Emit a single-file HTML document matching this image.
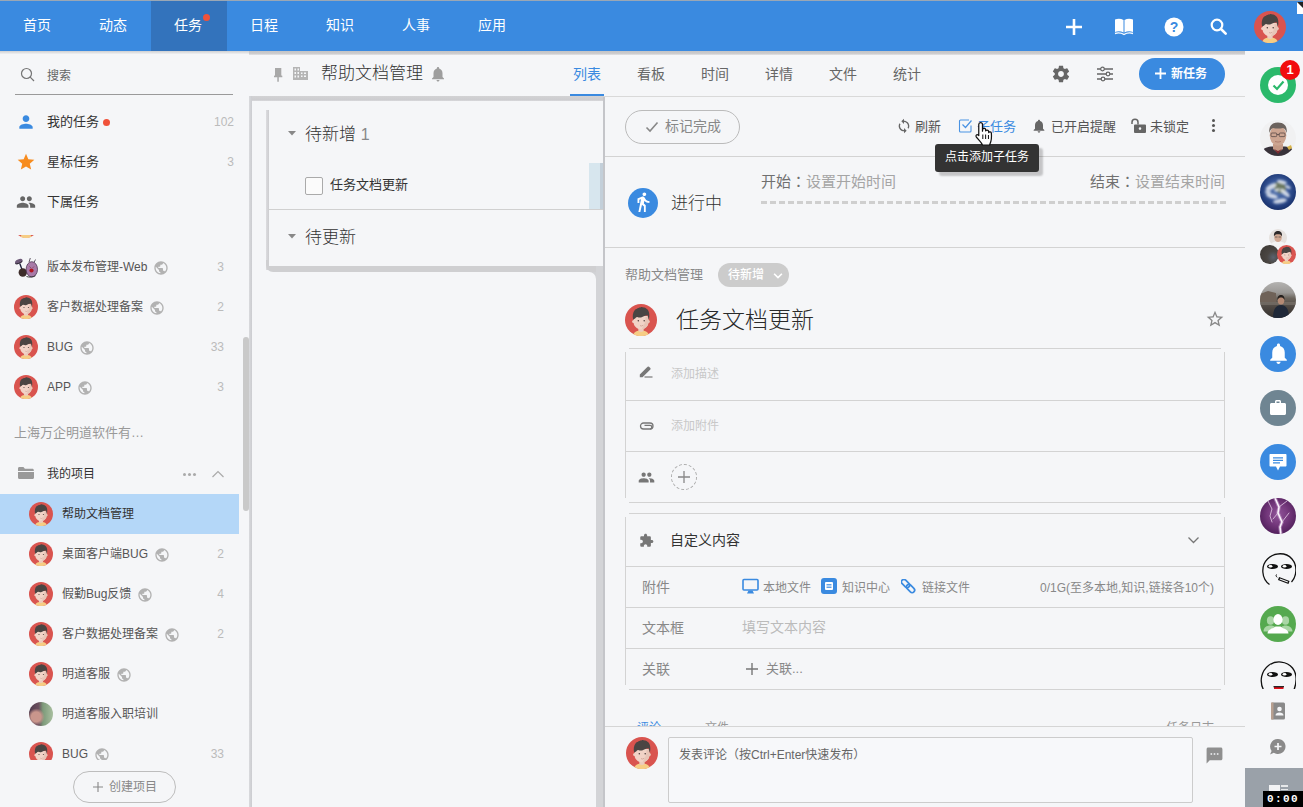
<!DOCTYPE html>
<html lang="zh-CN">
<head>
<meta charset="utf-8">
<title>任务</title>
<style>
*{box-sizing:border-box;margin:0;padding:0}
html,body{width:1303px;height:807px;overflow:hidden;background:#f5f6f8;font-family:"Liberation Sans","Noto Sans CJK SC",sans-serif;color:#333;font-size:13px}
.a{position:absolute;white-space:nowrap}
.t{position:absolute;white-space:nowrap;line-height:20px;height:20px}
#top{left:0;top:0;width:1303px;height:51px;background:#3a8ae0}
#top .n{position:absolute;top:1px;height:50px;width:76px;text-align:center;line-height:49px;color:#fff;font-size:14px;margin-left:-1px}
#top .act{margin-left:0;padding-right:2px}
#top .act{background:#3373bc}
.av{position:absolute;border-radius:50%;overflow:hidden}
.cnt{position:absolute;color:#bbb;font-size:12px;text-align:right;width:40px;line-height:20px}
.hl{position:absolute;height:1px;background:#d3d3d3}
.vl{position:absolute;width:1px;background:#d3d3d3}
</style>
</head>
<body>
<svg width="0" height="0" style="position:absolute">
<defs>
<symbol id="face" viewBox="0 0 32 32">
<circle cx="16" cy="16" r="16" fill="#d9544f"/>
<path d="M8.500 30.200c.8-2.300 3-3.200 5.200-3.500h4.600c2.200.3 4.400 1.200 5.200 3.500A16 16 0 0 1 8.500 30.200z" fill="#f6cd85"/>
<path d="M13.300 23h5.400v3.800c-1.500 1.600-3.900 1.600-5.400 0z" fill="#eccbbd"/>
<circle cx="8.600" cy="17.600" r="1.500" fill="#f0d2c6"/><circle cx="23.400" cy="17.600" r="1.500" fill="#e6c4b6"/>
<path d="M8.600 13c0-2 14.800-2 14.800 0v5.500c0 3.800-3.700 6.800-7.400 6.800s-7.400-3-7.400-6.800z" fill="#f1d3c7"/>
<path d="M16.500 25.300c3.500-.2 6.900-3.100 6.900-6.800V13h-3c.5 4-1.500 9-3.900 12.300z" fill="#e7c5b7"/>
<path d="M8.200 15.800c-.9-3.500-.6-7.500 1.800-10 1-1 1.800-.6 2.500-1.500 1-.9 2.200-.3 3.200-1.100 1.300-.7 2.300.5 3.500.3 1.500 0 2 1.200 3 1.800 2.300 2 2.600 6.500 1.700 10.300-.6-1.100-.9-2.800-1.200-4.300-2.600.2-3.900 1.100-6 2-1.500.5-3 .2-4.500-.3-1.300.2-1.800 1-2.200 1.800-.7-.1-1.200.3-1.800 1z" fill="#4a4543"/>
<circle cx="13.300" cy="16.700" r=".75" fill="#4a3a37"/><circle cx="19.200" cy="16.700" r=".75" fill="#4a3a37"/>
<path d="M15 21.600q1.700 1 3.300-.4" stroke="#c99a8c" stroke-width=".7" fill="none"/>
</symbol>
<symbol id="globe" viewBox="0 0 24 24"><path fill="#b2b2b2" d="M12 2C6.480 2 2 6.480 2 12s4.480 10 10 10 10-4.480 10-10S17.520 2 12 2zm-1 17.930c-3.950-.490-7-3.850-7-7.930 0-.620.080-1.210.210-1.790L9 15v1c0 1.100.9 2 2 2v1.930zm6.900-2.540c-.260-.810-1-1.390-1.900-1.390h-1v-3c0-.550-.450-1-1-1H8v-2h2c.550 0 1-.450 1-1V7h2c1.100 0 2-.9 2-2v-.410c2.930 1.190 5 4.060 5 7.410 0 2.080-.8 3.970-2.100 5.390z"/></symbol>
</defs>
</svg>

<!-- TOP BAR -->
<div class="a" id="top">
<div class="a" style="left:0;top:0;width:1303px;height:1px;background:#9aa7b5"></div>
<div class="n" style="left:0">首页</div>
<div class="n" style="left:76px">动态</div>
<div class="n act" style="left:151px">任务</div>
<div class="n" style="left:227px">日程</div>
<div class="n" style="left:303px">知识</div>
<div class="n" style="left:379px">人事</div>
<div class="n" style="left:455px">应用</div>
<div class="a" style="left:203px;top:14px;width:7px;height:7px;border-radius:50%;background:#f0523a"></div>
</div>


<!-- SIDEBAR -->
<div class="a" id="side" style="left:0;top:51px;width:250px;height:756px;overflow:hidden">
<svg class="a" style="left:20px;top:16px" width="16" height="16" viewBox="0 0 16 16"><circle cx="6.500" cy="6.500" r="5" fill="none" stroke="#757575" stroke-width="1.200"/><path d="M10.200 10.200L14 14" stroke="#757575" stroke-width="1.200"/></svg>
<div class="t" style="left:47px;top:15px;font-size:12px;color:#666">搜索</div>
<div class="hl" style="left:15px;top:43px;width:218px;background:#9a9a9a"></div>

<svg class="a" style="left:16px;top:61px" width="20" height="20" viewBox="0 0 24 24"><path fill="#3a8ae0" d="M12 12c2.210 0 4-1.790 4-4s-1.790-4-4-4-4 1.790-4 4 1.790 4 4 4zm0 2c-2.670 0-8 1.340-8 4v2h16v-2c0-2.660-5.330-4-8-4z"/></svg>
<div class="t" style="left:47px;top:61px">我的任务</div>
<div class="a" style="left:103px;top:68px;width:7px;height:7px;border-radius:50%;background:#f0523a"></div>
<div class="cnt" style="left:194px;top:61px">102</div>

<svg class="a" style="left:16px;top:101px" width="20" height="20" viewBox="0 0 24 24"><path fill="#f78c1f" d="M12 17.270L18.180 21l-1.640-7.030L22 9.240l-7.190-.610L12 2 9.190 8.630 2 9.240l5.460 4.730L5.820 21z"/></svg>
<div class="t" style="left:47px;top:101px">星标任务</div>
<div class="cnt" style="left:194px;top:101px">3</div>

<svg class="a" style="left:16px;top:141px" width="20" height="20" viewBox="0 0 24 24"><path fill="#666" d="M16 11c1.660 0 2.990-1.340 2.990-3S17.660 5 16 5c-1.660 0-3 1.340-3 3s1.340 3 3 3zm-8 0c1.660 0 2.990-1.340 2.990-3S9.660 5 8 5C6.340 5 5 6.340 5 8s1.340 3 3 3zm0 2c-2.330 0-7 1.170-7 3.500V19h14v-2.500c0-2.330-4.670-3.500-7-3.500zm8 0c-.290 0-.620.020-.970.050 1.160.840 1.970 1.970 1.970 3.450V19h6v-2.500c0-2.330-4.670-3.500-7-3.500z"/></svg>
<div class="t" style="left:47px;top:141px">下属任务</div>

<!-- scroll section -->
<div class="a" style="left:0;top:184px;width:240px;height:221px;overflow:hidden"><div class="a" style="left:0;top:-3px">
 <svg class="a" style="left:14px;top:-18px" width="24" height="24"><use href="#face"/></svg>
 <div class="av" style="left:14px;top:23px;width:24px;height:24px;border-radius:0;overflow:visible">
  <svg width="24" height="24" viewBox="0 0 24 24"><path d="M8 14.500L5.800 8.500" stroke="#1c1f3a" stroke-width="1.300"/><ellipse cx="4.800" cy="6.500" rx="4" ry="2.300" transform="rotate(-25 4.800 6.500)" fill="#6d5a78"/><path d="M1.300 8.600c1.500.8 4.500-.3 7-2.300" stroke="#2a2530" stroke-width="1" fill="none"/><circle cx="8.800" cy="17.500" r="4.200" fill="#3d2c2a"/><path d="M15 7.200L16.300 3M20 7.500l1.500-3" stroke="#3a3040" stroke-width=".8"/><ellipse cx="17.800" cy="14.300" rx="5.700" ry="7.600" fill="#a87aa8" stroke="#4a3350" stroke-width=".8"/><circle cx="17.500" cy="15.500" r="2.100" fill="#b01622"/><path d="M15.500 11.500l1.500 1.500M20 11.500L18.500 13" stroke="#7a3040" stroke-width=".6"/><path d="M12.500 21.500c3 1 6.500.8 9-.8" stroke="#333" stroke-width=".9" fill="none"/></svg>
 </div>
 <div class="t" style="left:47px;top:25px;font-size:12px;color:#555">版本发布管理-Web</div>
 <svg class="a" style="left:153px;top:28px" width="16" height="16"><use href="#globe"/></svg>
 <div class="cnt" style="left:184px;top:25px">3</div>

 <svg class="a" style="left:14px;top:63px" width="24" height="24"><use href="#face"/></svg>
 <div class="t" style="left:47px;top:65px;font-size:12px;color:#555">客户数据处理备案</div>
 <svg class="a" style="left:149px;top:68px" width="16" height="16"><use href="#globe"/></svg>
 <div class="cnt" style="left:184px;top:65px">2</div>

 <svg class="a" style="left:14px;top:103px" width="24" height="24"><use href="#face"/></svg>
 <div class="t" style="left:47px;top:105px;font-size:12px;color:#555">BUG</div>
 <svg class="a" style="left:79px;top:108px" width="16" height="16"><use href="#globe"/></svg>
 <div class="cnt" style="left:184px;top:105px">33</div>

 <svg class="a" style="left:14px;top:143px" width="24" height="24"><use href="#face"/></svg>
 <div class="t" style="left:47px;top:145px;font-size:12px;color:#555">APP</div>
 <svg class="a" style="left:77px;top:148px" width="16" height="16"><use href="#globe"/></svg>
 <div class="cnt" style="left:184px;top:145px">3</div>
</div>

</div><div class="t" style="left:14px;top:372px;color:#999">上海万企明道软件有…</div>

<svg class="a" style="left:17px;top:414px" width="18" height="16" viewBox="0 0 18 16"><path d="M1 3.500c0-.8.600-1.500 1.400-1.500h4l1.500 1.800h7.500c.8 0 1.400.6 1.400 1.400V6H1z" fill="#999"/><path d="M1 7h16v5.500c0 .8-.6 1.500-1.400 1.500H2.400C1.600 14 1 13.300 1 12.500z" fill="#999"/></svg>
<div class="t" style="left:47px;top:413px;font-size:12px">我的项目</div>
<div class="a" style="left:183px;top:422px;width:3px;height:3px;border-radius:50%;background:#aaa;box-shadow:5px 0 0 #aaa,10px 0 0 #aaa"></div>
<svg class="a" style="left:211px;top:418px" width="14" height="10" viewBox="0 0 14 10"><path d="M1.500 8L7 2.500 12.500 8" fill="none" stroke="#aaa" stroke-width="1.200"/></svg>

<!-- project list -->
<div class="a" style="left:0;top:443px;width:240px;height:266px;overflow:hidden"><div class="a" style="left:0;top:1px">
 <div class="a" style="left:0;top:-1px;width:239px;height:40px;background:#b4d7f8"></div>
 <svg class="a" style="left:29px;top:7px" width="24" height="24"><use href="#face"/></svg>
 <div class="t" style="left:62px;top:9px;font-size:12px">帮助文档管理</div>

 <svg class="a" style="left:29px;top:47px" width="24" height="24"><use href="#face"/></svg>
 <div class="t" style="left:62px;top:49px;font-size:12px;color:#555">桌面客户端BUG</div>
 <svg class="a" style="left:154px;top:52px" width="16" height="16"><use href="#globe"/></svg>
 <div class="cnt" style="left:184px;top:49px">2</div>

 <svg class="a" style="left:29px;top:87px" width="24" height="24"><use href="#face"/></svg>
 <div class="t" style="left:62px;top:89px;font-size:12px;color:#555">假勤Bug反馈</div>
 <svg class="a" style="left:137px;top:92px" width="16" height="16"><use href="#globe"/></svg>
 <div class="cnt" style="left:184px;top:89px">4</div>

 <svg class="a" style="left:29px;top:127px" width="24" height="24"><use href="#face"/></svg>
 <div class="t" style="left:62px;top:129px;font-size:12px;color:#555">客户数据处理备案</div>
 <svg class="a" style="left:164px;top:132px" width="16" height="16"><use href="#globe"/></svg>
 <div class="cnt" style="left:184px;top:129px">2</div>

 <svg class="a" style="left:29px;top:167px" width="24" height="24"><use href="#face"/></svg>
 <div class="t" style="left:62px;top:169px;font-size:12px;color:#555">明道客服</div>
 <svg class="a" style="left:116px;top:172px" width="16" height="16"><use href="#globe"/></svg>

 <div class="av" style="left:29px;top:207px;width:24px;height:24px;background:radial-gradient(circle at 30% 62%,#c9968c 0,#c9968c 22%,rgba(201,150,140,0) 38%),linear-gradient(90deg,#4f3a4c 0,#6a4f5e 40%,#7d9a7a 58%,#a9bfa0 100%)"></div>
 <div class="t" style="left:62px;top:209px;font-size:12px;color:#555">明道客服入职培训</div>

 <svg class="a" style="left:29px;top:247px" width="24" height="24"><use href="#face"/></svg>
 <div class="t" style="left:62px;top:249px;font-size:12px;color:#555">BUG</div>
 <svg class="a" style="left:94px;top:252px" width="16" height="16"><use href="#globe"/></svg>
 <div class="cnt" style="left:184px;top:249px">33</div>
</div>

</div><div class="a" style="left:73px;top:720px;width:103px;height:32px;border:1px solid #bdbdbd;border-radius:16px;line-height:30px;color:#888;font-size:12px;padding-left:35px">创建项目</div><svg class="a" style="left:93px;top:731px" width="10" height="10" viewBox="0 0 10 10"><path d="M5 0v10M0 5h10" stroke="#888" stroke-width="1.100"/></svg>

<!-- scrollbar -->
<div class="a" style="left:243px;top:286px;width:6px;height:174px;background:#c9c9c9;border-radius:3px"></div>

</div>


<div class="a" style="left:0;top:51px;width:249px;height:3px;background:linear-gradient(#cfd0d2,#e2e3e5 60%,#f0f1f3)"></div>
<div class="a" style="left:249px;top:51px;width:996px;height:4px;background:linear-gradient(#c4c4c6 0,#cbcbcd 60%,#e4e4e6 100%)"></div>
<!-- HEADER ROW -->
<div class="a" id="hdr" style="left:250px;top:51px;width:995px;height:46px">
<svg class="a" style="left:21px;top:16px" width="14" height="16" viewBox="0 0 14 16"><path d="M4 1h6.300v7.500l1 .3v1.500H7.800v4.500H6.300v-4.500H3V8.800l1-.3z" fill="#a8a8a8"/></svg>
<svg class="a" style="left:42px;top:15px" width="17" height="15" viewBox="0 0 17 15"><path d="M1 1h7v4h8v9H1zM2.500 2.500v2h1.500v-2zm3 0v2H7v-2zm-3 3.500v2h1.500V6zm3 0v2H7V6zm-3 3.500v2h1.500v-2zm3 0v2H7v-2zm3.500-3v1.500h1.500V6.500zm3 0v1.500H14V6.500zm-3 3v1.500h1.500V9.500zm3 0v1.500H14V9.500z" fill="#b5b5b5" fill-rule="evenodd"/></svg>
<div class="t" style="left:71px;top:13px;font-size:17px;color:#333;font-weight:300">帮助文档管理</div>
<svg class="a" style="left:179px;top:14px" width="18" height="18" viewBox="0 0 24 24"><path fill="#9e9e9e" d="M12 22c1.100 0 2-.9 2-2h-4c0 1.100.89 2 2 2zm6-6v-5c0-3.070-1.640-5.640-4.500-6.320V4c0-.830-.670-1.500-1.500-1.500s-1.500.670-1.500 1.500v.680C7.630 5.360 6 7.920 6 11v5l-2 2v1h16v-1l-2-2z"/></svg>
<div class="t" style="left:323px;top:13px;font-size:14px;color:#3a8ae0">列表</div>
<div class="t" style="left:387px;top:13px;font-size:14px;color:#666">看板</div>
<div class="t" style="left:451px;top:13px;font-size:14px;color:#666">时间</div>
<div class="t" style="left:515px;top:13px;font-size:14px;color:#666">详情</div>
<div class="t" style="left:579px;top:13px;font-size:14px;color:#666">文件</div>
<div class="t" style="left:643px;top:13px;font-size:14px;color:#666">统计</div>
<div class="a" style="left:320px;top:43px;width:34px;height:3px;background:#3a8ae0"></div>
<svg class="a" style="left:801px;top:13px" width="20" height="20" viewBox="0 0 24 24"><path fill="#666" d="M19.430 12.980c.040-.320.070-.640.070-.980s-.030-.660-.070-.980l2.110-1.650c.190-.150.240-.420.120-.640l-2-3.460c-.120-.220-.390-.3-.610-.220l-2.490 1c-.520-.4-1.080-.730-1.690-.980l-.380-2.650C14.460 2.180 14.250 2 14 2h-4c-.250 0-.460.180-.490.420l-.380 2.650c-.610.250-1.170.590-1.690.980l-2.490-1c-.230-.090-.490 0-.610.220l-2 3.460c-.130.220-.070.490.120.640l2.110 1.650c-.040.320-.070.650-.070.980s.030.660.070.980l-2.110 1.650c-.190.150-.240.420-.120.640l2 3.460c.120.220.390.3.610.220l2.490-1c.520.400 1.080.730 1.690.980l.380 2.650c.030.240.240.420.490.420h4c.250 0 .460-.180.490-.420l.380-2.650c.610-.250 1.170-.590 1.690-.980l2.490 1c.230.090.490 0 .610-.220l2-3.460c.120-.220.070-.490-.120-.640l-2.110-1.650zM12 15.500c-1.930 0-3.500-1.570-3.500-3.500s1.570-3.500 3.500-3.500 3.500 1.570 3.500 3.500-1.570 3.500-3.500 3.500z"/></svg>
<svg class="a" style="left:846px;top:14px" width="18" height="18" viewBox="0 0 18 18"><g stroke="#666" stroke-width="1.300" fill="none"><path d="M1 4h16M1 9h16M1 14h16"/></g><circle cx="6.500" cy="4" r="1.800" fill="#f5f6f8" stroke="#666" stroke-width="1.200"/><circle cx="12" cy="9" r="1.800" fill="#f5f6f8" stroke="#666" stroke-width="1.200"/><circle cx="7" cy="14" r="1.800" fill="#f5f6f8" stroke="#666" stroke-width="1.200"/></svg>
<div class="a" style="left:889px;top:7px;width:86px;height:32px;border-radius:16px;background:#3a8ae0;color:#fff;font-size:12px;line-height:33px;font-weight:bold;padding-left:32px">新任务</div><svg class="a" style="left:905px;top:17px" width="11" height="11" viewBox="0 0 11 11"><path d="M5.500 0v11M0 5.500h11" stroke="#fff" stroke-width="1.800"/></svg>
<div class="hl" style="left:354px;top:45px;width:641px;background:#d9d9d9"></div>
</div>

<!-- LIST AREA -->
<div class="a" style="left:249px;top:96px;width:355px;height:5px;background:linear-gradient(#d2d2d4,#cdcdd0 70%,#d8d8db);z-index:1"></div>
<div class="a" style="left:249px;top:96px;width:3px;height:711px;background:linear-gradient(90deg,#d9dadd,#cbccd0);z-index:1"></div>
<div class="a" id="list" style="left:250px;top:97px;width:354px;height:710px;overflow:hidden">
 <div class="a" style="left:16px;top:13px;width:3px;height:160px;background:linear-gradient(90deg,#dcdcdf,#cdcdd0)"></div>
 <div class="a" style="left:16px;top:163px;width:340px;height:12px;background:#cfcfd1;border-radius:0 0 0 7px"></div>
 <div class="a" style="left:19px;top:163px;width:337px;height:6px;background:#f5f6f8"></div>
 <div class="a" style="left:346px;top:169px;width:7px;height:545px;background:#d3d4d7"></div>
 <div class="a" style="left:338px;top:175px;width:8px;height:8px;background:#d1d2d5"></div>
 <div class="a" style="left:19px;top:175px;width:327px;height:545px;background:#f5f6f8;border-radius:0 7px 0 0"></div>
 <svg class="a" style="left:37.500px;top:34px" width="8" height="4.500" viewBox="0 0 9 5"><path d="M0 0h9L4.500 5z" fill="#888"/></svg>
 <div class="t" style="left:55px;top:28px;font-size:17px;color:#333;font-weight:300">待新增 <span style="color:#888;font-size:16px">1</span></div>
 <div class="a" style="left:339px;top:66px;width:15px;height:46px;background:linear-gradient(90deg,#d7e6ee 0,#d7e6ee 11px,#c3cfd9 11px)"></div>
 <div class="a" style="left:55px;top:80px;width:18px;height:18px;border:1px solid #aaa;border-radius:2px;background:#fbfbfb"></div>
 <div class="t" style="left:80px;top:78px;font-size:13px;color:#333">任务文档更新</div>
 <div class="hl" style="left:18px;top:112px;width:336px;background:#d0d0d0"></div>
 <svg class="a" style="left:37.500px;top:137px" width="8" height="4.500" viewBox="0 0 9 5"><path d="M0 0h9L4.500 5z" fill="#888"/></svg>
 <div class="t" style="left:55px;top:131px;font-size:17px;color:#333;font-weight:300">待更新</div>
</div>

<div class="a" style="left:603px;top:97px;width:2px;height:710px;background:#c4c5c9;z-index:2"></div>
<!-- DETAIL PANEL -->
<div class="a" id="det" style="left:604px;top:97px;width:641px;height:710px;background:#f5f6f8;overflow:hidden">
 <div class="a" style="left:21px;top:13px;width:115px;height:34px;border:1px solid #bbb;border-radius:17px;color:#888;font-size:14px;line-height:31px;padding-left:39px">标记完成</div>
 <svg class="a" style="left:41px;top:24px" width="14" height="12" viewBox="0 0 14 12"><path d="M1.500 6.500L5 10 12.500 1.500" fill="none" stroke="#888" stroke-width="1.600"/></svg>

 <svg class="a" style="left:292px;top:21px" width="16" height="16" viewBox="0 0 24 24"><path fill="#666" d="M12 4V1L8 5l4 4V6c3.310 0 6 2.690 6 6 0 1.010-.250 1.970-.7 2.800l1.460 1.460C19.540 15.030 20 13.570 20 12c0-4.420-3.580-8-8-8zm0 14c-3.310 0-6-2.690-6-6 0-1.010.250-1.970.7-2.800L5.240 7.740C4.460 8.970 4 10.430 4 12c0 4.420 3.580 8 8 8v3l4-4-4-4v3z"/></svg>
 <div class="t" style="left:311px;top:20px;color:#555">刷新</div>
 <svg class="a" style="left:354px;top:21px" width="15" height="15" viewBox="0 0 15 15"><path d="M13 7.500V13a1 1 0 0 1-1 1H2.500a1 1 0 0 1-1-1V3a1 1 0 0 1 1-1H11" fill="none" stroke="#4a93e3" stroke-width="1.100"/><path d="M4.500 6.500L7.500 9.500 13.500 2.500" fill="none" stroke="#4a93e3" stroke-width="1.200"/></svg>
 <div class="t" style="left:373px;top:20px;color:#3a8ae0">子任务</div>
 <svg class="a" style="left:427px;top:21px" width="16" height="16" viewBox="0 0 24 24"><path fill="#666" d="M12 22c1.100 0 2-.9 2-2h-4c0 1.100.89 2 2 2zm6-6v-5c0-3.070-1.640-5.640-4.500-6.320V4c0-.830-.670-1.500-1.500-1.500s-1.500.670-1.500 1.500v.680C7.630 5.360 6 7.920 6 11v5l-2 2v1h16v-1l-2-2z"/></svg>
 <div class="t" style="left:447px;top:20px;color:#555">已开启提醒</div>
 <svg class="a" style="left:526px;top:20px" width="17" height="17" viewBox="0 0 17 17"><path d="M2 7V5.200a3 3 0 0 1 6 0V7.500" fill="none" stroke="#666" stroke-width="1.500"/><path d="M5 7.500h10a1 1 0 0 1 1 1V15a1 1 0 0 1-1 1H5a1 1 0 0 1-1-1V8.500a1 1 0 0 1 1-1zM10 10.300a1.300 1.300 0 1 0 0 2.600 1.300 1.300 0 0 0 0-2.600z" fill="#666" fill-rule="evenodd"/></svg>
 <div class="t" style="left:546px;top:20px;color:#555">未锁定</div>
 <div class="a" style="left:607px;top:22px;width:3px;height:3px;border-radius:50%;background:#555;box-shadow:0 5px 0 #555,0 10px 0 #555;margin-left:.5px"></div>

 <div class="hl" style="left:0;top:59px;width:641px"></div>
 <div class="a" style="left:24px;top:91px;width:30px;height:30px;border-radius:50%;background:#3a8ae0"></div>
 <svg class="a" style="left:28px;top:94px" width="22" height="22" viewBox="0 0 24 24"><path fill="#fff" d="M13.500 5.500c1.100 0 2-.9 2-2s-.9-2-2-2-2 .9-2 2 .9 2 2 2zM9.800 8.900L7 23h2.100l1.800-8 2.100 2v6h2v-7.500l-2.100-2 .6-3C14.800 12 16.800 13 19 13v-2c-1.900 0-3.500-1-4.300-2.400l-1-1.600c-.4-.6-1-1-1.700-1-.3 0-.5.100-.8.100L6 8.300V13h2V9.600l1.800-.7"/></svg>
 <div class="t" style="left:67px;top:96px;font-size:17px;line-height:21px;color:#333;font-weight:300">进行中</div>
 <div class="t" style="left:157px;top:74px;font-size:15px;color:#a5a5a5"><span style="color:#707070">开始<span lang="zh-TW" style="font-family:'Noto Sans CJK TC',sans-serif">：</span></span>设置开始时间</div>
 <div class="t" style="right:20px;top:74px;font-size:15px;color:#a5a5a5"><span style="color:#707070">结束<span lang="zh-TW" style="font-family:'Noto Sans CJK TC',sans-serif">：</span></span>设置结束时间</div>
 <div class="a" style="left:157px;top:104px;width:465px;height:3px;background:repeating-linear-gradient(90deg,#cfcfcf 0,#cfcfcf 6px,transparent 6px,transparent 9px)"></div>
 <div class="hl" style="left:0;top:150px;width:641px"></div>

 <div class="t" style="left:21px;top:168px;color:#888">帮助文档管理</div>
 <div class="a" style="left:114px;top:166px;width:71px;height:24px;border-radius:12px;background:#ccc;color:#fff;font-size:12px;line-height:25px;padding-left:10px;font-weight:500">待新增</div>
 <svg class="a" style="left:169px;top:175px" width="10" height="8" viewBox="0 0 9 7"><path d="M1 1.500L4.500 5 8 1.500" fill="none" stroke="#fff" stroke-width="1.500"/></svg>

 <svg class="a" style="left:21px;top:207px" width="32" height="32"><use href="#face"/></svg>
 <div class="t" style="left:72px;top:209px;font-size:23px;line-height:28px;height:28px;color:#2a2a2a;font-weight:300">任务文档更新</div>
 <svg class="a" style="left:601px;top:212px" width="20" height="20" viewBox="0 0 24 24"><path fill="#888" d="M22 9.240l-7.190-.620L12 2 9.190 8.630 2 9.240l5.460 4.730L5.820 21 12 17.270 18.180 21l-1.630-7.030L22 9.240zM12 15.400l-3.760 2.270 1-4.280-3.320-2.880 4.380-.380L12 6.100l1.710 4.040 4.380.380-3.320 2.880 1 4.280L12 15.400z"/></svg>

 <!-- box 1 -->
 <div class="hl" style="left:25px;top:251px;width:592px"></div>
 <div class="vl" style="left:21px;top:255px;height:146px"></div>
 <div class="vl" style="left:620px;top:255px;height:146px"></div>
 <div class="hl" style="left:21px;top:303px;width:600px"></div>
 <div class="hl" style="left:21px;top:354px;width:600px"></div>
 <div class="hl" style="left:25px;top:405px;width:592px"></div>
 <svg class="a" style="left:35px;top:268px" width="15" height="14" viewBox="0 0 15 14"><path d="M.8 12.200V9.600L8.600 1.800a1 1 0 0 1 1.400 0l1.300 1.300a1 1 0 0 1 0 1.400L3.500 12.200z" fill="#777"/><path d="M5.500 12h8" stroke="#777" stroke-width="1.200"/></svg>
 <div class="t" style="left:67px;top:267px;font-size:12px;color:#c8c8c8">添加描述</div>
 <svg class="a" style="left:34px;top:323px" width="16" height="12" viewBox="0 0 16 12"><path d="M12 3H5.500a3 3 0 0 0 0 6H12a1.800 1.800 0 0 0 0-3.600H6.500" fill="none" stroke="#777" stroke-width="1.300"/><path d="M12 3a3 3 0 0 1 0 6" fill="none" stroke="#777" stroke-width="1.300"/></svg>
 <div class="t" style="left:67px;top:319px;font-size:12px;color:#c8c8c8">添加附件</div>
 <svg class="a" style="left:34px;top:372px" width="17" height="17" viewBox="0 0 24 24"><path fill="#777" d="M16 11c1.660 0 2.990-1.340 2.990-3S17.660 5 16 5c-1.660 0-3 1.340-3 3s1.340 3 3 3zm-8 0c1.660 0 2.990-1.340 2.990-3S9.660 5 8 5C6.340 5 5 6.340 5 8s1.340 3 3 3zm0 2c-2.330 0-7 1.170-7 3.500V19h14v-2.500c0-2.330-4.670-3.500-7-3.500zm8 0c-.290 0-.620.020-.970.050 1.160.840 1.970 1.970 1.970 3.450V19h6v-2.500c0-2.330-4.670-3.500-7-3.500z"/></svg>
 <div class="a" style="left:67px;top:367px;width:26px;height:26px;border:1px dashed #aaa;border-radius:50%"></div>
 <svg class="a" style="left:74px;top:374px" width="12" height="12" viewBox="0 0 12 12"><path d="M6 0v12M0 6h12" stroke="#888" stroke-width="1.300"/></svg>

 <!-- box 2 -->
 <div class="hl" style="left:25px;top:416px;width:592px"></div>
 <div class="vl" style="left:21px;top:420px;height:168px"></div>
 <div class="vl" style="left:620px;top:420px;height:168px"></div>
 <div class="hl" style="left:21px;top:469px;width:600px"></div>
 <div class="hl" style="left:21px;top:510px;width:600px"></div>
 <div class="hl" style="left:21px;top:551px;width:600px"></div>
 <div class="hl" style="left:25px;top:592px;width:592px"></div>
 <svg class="a" style="left:35px;top:436px" width="15" height="15" viewBox="0 0 24 24"><path fill="#777" d="M20.500 11H19V7c0-1.100-.9-2-2-2h-4V3.500C13 2.120 11.880 1 10.500 1S8 2.120 8 3.500V5H4c-1.100 0-1.990.9-1.990 2v3.800H3.500c1.490 0 2.700 1.210 2.700 2.700s-1.210 2.700-2.700 2.700H2V20c0 1.100.9 2 2 2h3.800v-1.500c0-1.490 1.210-2.700 2.700-2.700 1.490 0 2.700 1.210 2.700 2.700V22H17c1.100 0 2-.9 2-2v-4h1.500c1.380 0 2.500-1.120 2.500-2.500S21.880 11 20.500 11z"/></svg>
 <div class="t" style="left:66px;top:433px;font-size:14px;color:#333">自定义内容</div>
 <svg class="a" style="left:583px;top:439px" width="13" height="9" viewBox="0 0 13 9"><path d="M1.500 1.500l5 5 5-5" fill="none" stroke="#777" stroke-width="1.300"/></svg>

 <div class="t" style="left:38px;top:480px;font-size:14px;color:#888">附件</div>
 <svg class="a" style="left:138px;top:481px" width="17" height="17" viewBox="0 0 17 17"><rect x="1" y="1.500" width="15" height="10.500" rx="1" fill="none" stroke="#3a8ae0" stroke-width="1.600"/><path d="M5 15.500h7l-1.500-3h-4z" fill="#3a8ae0"/></svg>
 <div class="t" style="left:159px;top:481px;font-size:12px;color:#888">本地文件</div>
 <div class="a" style="left:217px;top:481px;width:16px;height:16px;border-radius:3px;background:#3a8ae0"></div>
 <svg class="a" style="left:221px;top:485px" width="8" height="8" viewBox="0 0 8 8"><rect x="0" y="0" width="8" height="8" rx="1" fill="#fff"/><path d="M1.500 2.500h5M1.500 4h5M1.500 5.500h5" stroke="#3a8ae0" stroke-width=".8"/></svg>
 <div class="t" style="left:238px;top:481px;font-size:12px;color:#888">知识中心</div>
 <svg class="a" style="left:297px;top:482px" width="17" height="17" viewBox="0 0 17 17"><g fill="none" stroke="#3a8ae0" stroke-width="1.700"><rect x="-2" y="-2" width="9.500" height="5" rx="2.500" transform="translate(4.500 4.500) rotate(45) translate(-2.700 -.5)"/><rect x="-2" y="-2" width="9.500" height="5" rx="2.500" transform="translate(9.500 9.500) rotate(45) translate(-2.700 -.5)"/></g></svg>
 <div class="t" style="left:318px;top:481px;font-size:12px;color:#888">链接文件</div>
 <div class="t" style="right:31px;top:481px;font-size:12px;color:#888">0/1G(至多本地,知识,链接各10个)</div>

 <div class="t" style="left:38px;top:521px;font-size:14px;color:#888">文本框</div>
 <div class="t" style="left:138px;top:520px;font-size:14px;color:#bbb">填写文本内容</div>

 <div class="t" style="left:38px;top:562px;font-size:14px;color:#888">关联</div>
 <svg class="a" style="left:142px;top:566px" width="12" height="12" viewBox="0 0 12 12"><path d="M6 0v12M0 6h12" stroke="#777" stroke-width="1.400"/></svg>
 <div class="t" style="left:162px;top:562px;font-size:13px;color:#888">关联...</div>

 <!-- clipped tabs -->
 <div class="a" style="left:0;top:615px;width:641px;height:14px;overflow:hidden">
  <div class="t" style="left:33px;top:6px;font-size:12px;color:#3a8ae0">评论</div>
  <div class="t" style="left:101px;top:6px;font-size:12px;color:#999">文件</div>
  <div class="t" style="right:31px;top:6px;font-size:12px;color:#999">任务日志</div>
 </div>

 <!-- comment -->
 <div class="a" style="left:0;top:629px;width:641px;height:81px;background:#f5f6f8;border-top:1px solid #d5d5d5"></div>
 <svg class="a" style="left:22px;top:640px" width="32" height="32"><use href="#face"/></svg>
 <div class="a" style="left:64px;top:640px;width:525px;height:66px;border:1px solid #ccc;border-radius:2px;background:#f7f8fa"></div>
 <div class="t" style="left:75px;top:648px;font-size:12px;color:#666">发表评论（按Ctrl+Enter快速发布）</div>
 <svg class="a" style="left:601px;top:649px" width="19" height="19" viewBox="0 0 24 24"><path fill="#8f8f8f" d="M20 2H4c-1.100 0-1.990.9-1.990 2L2 22l4-4h14c1.100 0 2-.9 2-2V4c0-1.100-.9-2-2-2zM9 11H7V9h2v2zm4 0h-2V9h2v2zm4 0h-2V9h2v2z"/></svg>
</div>


<!-- TOP RIGHT ICONS --><div class="a" style="left:0;top:0;z-index:6">
<svg class="a" style="left:1065px;top:18px" width="18" height="18" viewBox="0 0 18 18"><path d="M9 1v16M1 9h16" stroke="#fff" stroke-width="2.600"/></svg>
<svg class="a" style="left:1114px;top:17px" width="20" height="19" viewBox="0 0 20 19"><path d="M1 2.500C4 1.200 7 1.500 9.500 3v12.500C7 14 4 13.800 1 15zM19 2.500C16 1.200 13 1.500 10.500 3v12.500C13 14 16 13.800 19 15z" fill="#fff"/><path d="M1 16.500c3-1 6-.8 9 1 3-1.800 6-2 9-1" stroke="#fff" stroke-width="1.400" fill="none"/></svg>
<svg class="a" style="left:1164px;top:17px" width="20" height="20" viewBox="0 0 20 20"><circle cx="10" cy="10" r="9.500" fill="#fff"/><text x="10" y="15" text-anchor="middle" font-family="Liberation Sans,sans-serif" font-weight="bold" font-size="14" fill="#3a8ae0">?</text></svg>
<svg class="a" style="left:1210px;top:18px" width="18" height="18" viewBox="0 0 18 18"><circle cx="7" cy="7" r="5.300" fill="none" stroke="#fff" stroke-width="2.200"/><path d="M11 11L15.700 15.700" stroke="#fff" stroke-width="2.600" stroke-linecap="round"/></svg>
<svg class="a" style="left:1254px;top:11px" width="32" height="32"><use href="#face"/></svg>
<div class="a" style="left:1297px;top:2px;width:6px;height:12px;background:#fff"></div>
<div class="a" style="left:1297px;top:2px;width:0;height:0;border-left:6px solid transparent;border-top:6px solid #222"></div>

</div>
<!-- RIGHT RAIL -->
<div class="a" id="rail" style="left:1245px;top:54px;width:58px;height:753px;background:#f5f6f8;overflow:hidden">
 <div class="a" style="left:15px;top:13px;width:36px;height:36px;border-radius:50%;background:#2bb96b"></div>
 <div class="a" style="left:23px;top:21px;width:20px;height:20px;border-radius:50%;background:#fff"></div>
 <svg class="a" style="left:27px;top:26px" width="13" height="11" viewBox="0 0 13 11"><path d="M1.500 5.500L5 9 11.500 1.500" fill="none" stroke="#2bb96b" stroke-width="2.200"/></svg>
 <div class="a" style="left:35px;top:6px;width:20px;height:20px;border-radius:50%;background:#f20d0d;color:#fff;font-weight:bold;font-size:13px;text-align:center;line-height:20px">1</div>

 <!-- man photo -->
 <svg class="a" style="left:15px;top:66px" width="36" height="36" viewBox="0 0 36 36"><defs><clipPath id="c1"><circle cx="18" cy="18" r="18"/></clipPath></defs><g clip-path="url(#c1)"><rect width="36" height="36" fill="#f1f1f2"/><path d="M-1 36c1-6 6-8.500 12-9.500h14c6 1 11 3.500 12 9.500z" fill="#38323a"/><path d="M13 24h10v5l-5 4-5-4z" fill="#c49a86"/><ellipse cx="18" cy="15.500" rx="8.300" ry="10.300" fill="#cda591"/><path d="M9.300 13C8.500 6 12 2.500 18 2.500S27.500 6 26.700 13c-.8-3-2.200-4.500-3.700-5-3 .8-7 .8-10 0-1.500.5-2.900 2-3.700 5z" fill="#6b625d"/><g fill="none" stroke="#5a4a48" stroke-width=".8"><rect x="11" y="13" width="5.800" height="3.600" rx="1"/><rect x="19.200" y="13" width="5.800" height="3.600" rx="1"/><path d="M16.800 14.500h2.400"/></g><path d="M15 21.500q3 1.200 6 0" stroke="#a8776a" stroke-width=".8" fill="none"/><path d="M27 27l4-2 1 3-3 2z" fill="#d8b44a"/><path d="M14 29l4 5 4-5-4 2z" fill="#7a2a30"/></g></svg>

 <!-- earth -->
 <div class="av" style="left:15px;top:120px;width:36px;height:36px;background:radial-gradient(circle at 50% 45%,#5a79b0 0,#3b5b9c 35%,#1f3a78 65%,#0c1b42 100%)"></div>
 <svg class="a" style="left:15px;top:120px" width="36" height="36" viewBox="0 0 36 36"><defs><clipPath id="ce"><circle cx="18" cy="18" r="18"/></clipPath><filter id="bl" x="-20%" y="-20%" width="140%" height="140%"><feGaussianBlur stdDeviation=".9"/></filter></defs><g clip-path="url(#ce)" filter="url(#bl)"><path d="M15 9c3-2 8-1 10 2s1 7-2 8-6-1-8-3-2-5 0-7z" fill="#6f7a5a" opacity=".9"/><g fill="#eef2f7" opacity=".8"><ellipse cx="11" cy="13" rx="6" ry="2.600" transform="rotate(-30 11 13)"/><ellipse cx="22" cy="8" rx="5" ry="1.800" transform="rotate(15 22 8)"/><ellipse cx="25" cy="19" rx="6" ry="2.200" transform="rotate(40 25 19)"/><ellipse cx="12" cy="22" rx="6" ry="2.400" transform="rotate(15 12 22)"/><ellipse cx="20" cy="27" rx="7" ry="2.400" transform="rotate(-10 20 27)"/><ellipse cx="8" cy="18" rx="3" ry="1.500"/><ellipse cx="28" cy="13" rx="3" ry="1.300" transform="rotate(30 28 13)"/><ellipse cx="17" cy="16" rx="3" ry="1.200" transform="rotate(-20 17 16)"/></g></g></svg>

 <!-- group of 3 -->
 <svg class="a" style="left:24px;top:175px" width="18" height="18" viewBox="0 0 18 18"><defs><clipPath id="cg"><circle cx="9" cy="9" r="9"/></clipPath></defs><g clip-path="url(#cg)"><rect width="18" height="18" fill="#e6e2df"/><path d="M1 18c0-4 3-5.500 8-5.500s8 1.500 8 5.500z" fill="#f4f4f4"/><ellipse cx="9" cy="8.500" rx="3.800" ry="4.600" fill="#d2a892"/><path d="M5 7.500C4.500 3.500 6.500 2 9 2s4.500 1.500 4 5.500c-.8-1.700-1.600-2.300-4-2.300S5.800 5.800 5 7.500z" fill="#2e2a2a"/><path d="M6 8h2.500M9.500 8H12" stroke="#333" stroke-width=".6"/></g></svg>
 <div class="av" style="left:15px;top:191px;width:19px;height:19px;background:radial-gradient(circle at 70% 65%,#5a626e 0,#4a4642 35%,#3a3632 100%)"></div>
 <svg class="a" style="left:32px;top:191px" width="19" height="19"><use href="#face"/></svg>

 <!-- street photo -->
 <svg class="a" style="left:15px;top:228px" width="36" height="36" viewBox="0 0 36 36"><defs><clipPath id="c2"><circle cx="18" cy="18" r="18"/></clipPath><linearGradient id="sg" x1="0" y1="0" x2="0" y2="1"><stop offset="0" stop-color="#b4b3b1"/><stop offset=".3" stop-color="#9a9895"/><stop offset=".45" stop-color="#6b645c"/><stop offset=".7" stop-color="#4c4641"/><stop offset="1" stop-color="#35312f"/></linearGradient></defs><g clip-path="url(#c2)"><rect width="36" height="36" fill="url(#sg)"/><path d="M0 12l8-3 8 2v9H0z" fill="#6f6258"/><path d="M0 20h36v3H0z" fill="#7d766e" opacity=".6"/><path d="M13 36c0-8 2.500-13 8-13s8 5 8 13z" fill="#1f2838"/><ellipse cx="21" cy="18.500" rx="3.300" ry="4" fill="#b48a74"/><path d="M17.500 18c-.3-3.500 1.300-5 3.500-5s3.800 1.500 3.500 5c-1-2-2-2.500-3.500-2.500S18.500 16 17.500 18z" fill="#25201e"/></g></svg>

 <!-- bell -->
 <div class="av" style="left:15px;top:282px;width:36px;height:36px;background:#3a8ae0"></div>
 <svg class="a" style="left:20.500px;top:287px" width="25" height="25" viewBox="0 0 24 24"><path fill="#fff" d="M12 22c1.100 0 2-.9 2-2h-4c0 1.100.89 2 2 2zm6-6v-5c0-3.070-1.640-5.640-4.500-6.320V4c0-.830-.670-1.500-1.500-1.500s-1.500.670-1.500 1.500v.680C7.630 5.360 6 7.920 6 11v5l-2 2v1h16v-1l-2-2z"/></svg>

 <!-- briefcase -->
 <div class="av" style="left:15px;top:336px;width:36px;height:36px;background:#6f8592"></div>
 <svg class="a" style="left:24px;top:345px" width="18" height="17" viewBox="0 0 18 17"><path d="M6 4V2.500C6 1.700 6.700 1 7.500 1h3c.8 0 1.500.7 1.500 1.500V4h3.500c.8 0 1.500.7 1.500 1.500v9c0 .8-.7 1.500-1.500 1.500h-13C1.700 16 1 15.300 1 14.500v-9C1 4.700 1.700 4 2.500 4zm1.500 0h3V2.500h-3z" fill="#fff" fill-rule="evenodd"/></svg>

 <!-- chat -->
 <div class="av" style="left:15px;top:390px;width:36px;height:36px;background:#3a8ae0"></div>
 <svg class="a" style="left:24px;top:399px" width="18" height="19" viewBox="0 0 18 19"><path d="M1.500 1h15c.6 0 1 .4 1 1v10.500c0 .6-.4 1-1 1H11l-2 4-2-4H1.500c-.6 0-1-.4-1-1V2c0-.6.400-1 1-1z" fill="#fff"/><path d="M4 4.800h10M4 7.300h10M4 9.800h7" stroke="#3a8ae0" stroke-width="1.200"/></svg>

 <!-- lightning -->
 <div class="av" style="left:15px;top:444px;width:36px;height:36px;background:radial-gradient(circle at 50% 45%,#91559a 0,#74387c 40%,#52205c 75%,#3d1546 100%)"></div>
 <svg class="a" style="left:15px;top:444px" width="36" height="36" viewBox="0 0 36 36"><defs><clipPath id="cl"><circle cx="18" cy="18" r="18"/></clipPath></defs><g clip-path="url(#cl)" fill="none" stroke-linecap="round" stroke-linejoin="round"><path d="M15 0l4 9-1 6 4 9-2 5 1 8" stroke="#c9a3d0" stroke-width="3.500" opacity=".55"/><path d="M15 0l4 9-1 6 4 9-2 5 1 8" stroke="#fbf3fc" stroke-width="1.600"/><path d="M8 3l4 8-2 7 2 6" stroke="#e6cfe9" stroke-width=".8"/><path d="M19 9l8-6M22 24l7-9M18 15l-5 6" stroke="#e6cfe9" stroke-width=".8"/></g></svg>

 <!-- meme face 1 -->
 <svg class="a" style="left:15px;top:498px" width="36" height="36" viewBox="0 0 36 36"><path d="M9.500 32.500C1.500 27 .5 14 7.500 7S26 0 32 7s4.500 17.500-.5 23" fill="none" stroke="#111" stroke-width="1.300"/><ellipse cx="12.500" cy="14.500" rx="5.500" ry="2.600" fill="#111"/><ellipse cx="26.500" cy="14.500" rx="5.500" ry="2.600" fill="#111"/><ellipse cx="10.500" cy="14.300" rx="1.900" ry="1.300" fill="#fff"/><ellipse cx="24.500" cy="14.300" rx="1.900" ry="1.300" fill="#fff"/><path d="M16.500 22.500c-.8 1-.5 2 .8 2.800" fill="none" stroke="#111" stroke-width="1"/><path d="M18.500 26.500l10.500 4" stroke="#111" stroke-width="3"/><path d="M19.800 27l8 3" stroke="#f5f6f8" stroke-width="1.100"/></svg>

 <!-- green group -->
 <div class="av" style="left:15px;top:552px;width:36px;height:36px;background:#55a94f"></div>
 <svg class="a" style="left:15px;top:552px" width="36" height="36" viewBox="0 0 36 36"><g fill="#a9d6a5"><ellipse cx="10.500" cy="14.500" rx="3.600" ry="4.300"/><path d="M3.500 25.500c0-4 3-6 7-6s6 2 6 6z"/><ellipse cx="25.500" cy="14.500" rx="3.600" ry="4.300"/><path d="M19.500 25.500c0-4 3-6 6-6s7 2 7 6z"/></g><g fill="#fff"><ellipse cx="18" cy="13.500" rx="4.600" ry="5.400"/><path d="M7.500 27.500c0-2.500 2-4.500 6-5.500l2-1.500h5l2 1.500c4 1 6 3 6 5.500z"/></g></svg>

 <!-- meme face 2 -->
 <svg class="a" style="left:15px;top:606px" width="36" height="36" viewBox="0 0 36 36"><path d="M3.500 30C-1 21 1.500 11 8.500 5.500S27 1 32.500 8s4 15 1.500 22" fill="none" stroke="#111" stroke-width="1.300"/><ellipse cx="12.500" cy="14.500" rx="5.500" ry="2.600" fill="#111"/><ellipse cx="26.500" cy="14.500" rx="5.500" ry="2.600" fill="#111"/><ellipse cx="10.500" cy="14.300" rx="1.900" ry="1.300" fill="#fff"/><ellipse cx="24.500" cy="14.300" rx="1.900" ry="1.300" fill="#fff"/><path d="M14 27h9.500v3H14z" fill="#e0101a"/><path d="M13.500 26.700h10.500" stroke="#111" stroke-width="1.200"/></svg>
 <div class="a" style="left:0;top:635px;width:58px;height:10px;background:#f5f6f8"></div>

 <!-- contacts -->
 <svg class="a" style="left:25px;top:648px" width="16" height="19" viewBox="0 0 16 19"><rect x="1" y="0.500" width="14" height="17" rx="1.500" fill="#8a8a8a"/><rect x="1" y="0.500" width="2.500" height="17" fill="#b8a090"/><circle cx="9.500" cy="7" r="2.300" fill="#f5f6f8"/><path d="M5.500 13.500c0-2.200 1.800-3 4-3s4 .8 4 3z" fill="#f5f6f8"/></svg>
 <!-- chat plus -->
 <svg class="a" style="left:24px;top:684px" width="18" height="18" viewBox="0 0 18 18"><path d="M9 1a7.500 7.500 0 1 1-4.200 13.700L1 16.500l1.600-3.600A7.500 7.500 0 0 1 9 1z" fill="#8a8a8a"/><path d="M9 5v7M5.500 8.500h7" stroke="#f5f6f8" stroke-width="1.700"/></svg>

 <div class="a" style="left:0;top:714px;width:58px;height:40px;background:#9aa1a9"></div>
 <div class="a" style="left:24px;top:731px;width:11px;height:7px;background:#f2f3f5"></div>
 <div class="a" style="left:36px;top:731px;width:7px;height:2px;background:#e6e8ea"></div>
 <div class="a" style="left:36px;top:735px;width:7px;height:1px;background:#e6e8ea"></div>
 <div class="a" style="left:18px;top:737px;width:40px;height:16px;background:#000;color:#fff;font-family:'Liberation Mono',monospace;font-weight:bold;font-size:11px;line-height:17px;letter-spacing:1.400px;padding-left:4px">0:00</div>
</div>

<!-- TOOLTIP -->
<div class="a" style="left:935px;top:144px;width:104px;height:28px;border-radius:3px;background:#333;color:#fff;font-size:12px;line-height:27px;text-align:center;box-shadow:4px 4px 2px rgba(0,0,0,.2)">点击添加子任务</div>
<!-- CURSOR -->
<svg class="a" style="left:974px;top:121px" width="21" height="27" viewBox="0 0 18 24"><path d="M5.500 1.500c1 0 1.700.7 1.700 1.700V9l.2-1.800c.2-.8 2.300-.8 2.500 0l.2 1.600c.3-1 2.300-.9 2.500.2l.2 1.300c.4-.9 2.200-.7 2.300.5.300 3.500.2 6.500-1.100 9.200-.2.500-.4 1-.4 1.500H7.300c-.5-1.500-1.500-2.700-2.600-3.900L1.700 14.200c-.9-1.100.4-2.600 1.600-1.700l.6.500V3.200c0-1 .7-1.700 1.600-1.700z" fill="#fff" stroke="#111" stroke-width="1.100" stroke-linejoin="round"/><path d="M7.500 12v4M10 12v4M12.500 12.500v3.500" stroke="#111" stroke-width=".9"/></svg>

</body>
</html>
